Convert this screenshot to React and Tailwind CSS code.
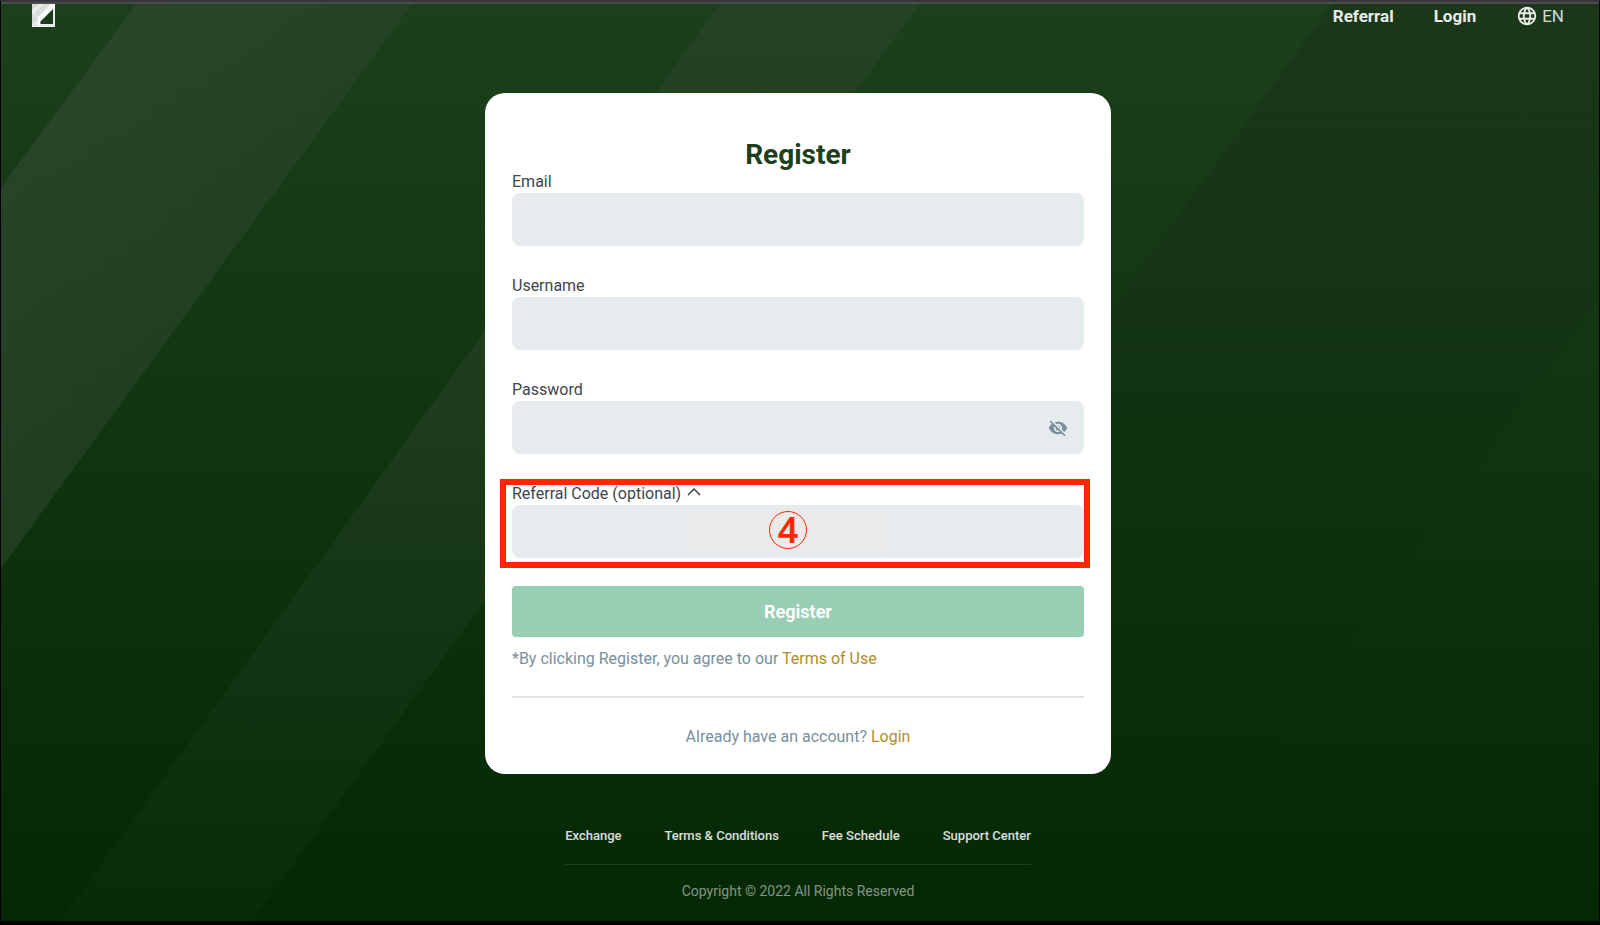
import React, { useState } from "react";
import { MdOutlineLanguage, MdVisibilityOff } from "react-icons/md";

const FIELDS = [
  { id: "email", label: "Email", type: "email" },
  { id: "username", label: "Username", type: "text" },
  { id: "password", label: "Password", type: "password" },
];

const FOOTER_LINKS = ["Exchange", "Terms & Conditions", "Fee Schedule", "Support Center"];

function Logo() {
  return (
    <svg viewBox="0 0 23 23" className="size-[23px]">
      <path d="M0 0H23V23H0Z" fill="#e9ece9" />
      <path d="M0 0H7L0 6Z" fill="#d3d8d3" />
      <path d="M11 0H18L5 13L2 10Z" fill="#d9ddd9" />
      <path d="M0 9L6 15L0 21Z" fill="#d6dad6" />
      <path d="M20 0H23V4L8 18V23H6V14Z" fill="#fbfcfb" />
      <path d="M21 5V20H8.500V17.500Z" fill="#1a3c1a" />
    </svg>
  );
}

// Diagonal bands behind the page
function Stripes() {
  return (
    <svg
      viewBox="0 0 1600 925"
      preserveAspectRatio="none"
      className="absolute inset-0 h-full w-full"
      aria-hidden="true"
    >
      <defs>
        <linearGradient id="bandA" x1="0" y1="0" x2="1" y2="0">
          <stop offset="0" stopColor="#6a6a6a" stopOpacity="0.2" />
          <stop offset="1" stopColor="#6a6a6a" stopOpacity="0.1" />
        </linearGradient>
        <linearGradient id="bandB" gradientUnits="userSpaceOnUse" x1="0" y1="0" x2="0" y2="925">
          <stop offset="0" stopColor="#6a6a6a" stopOpacity="0.1" />
          <stop offset="0.45" stopColor="#6a6a6a" stopOpacity="0.14" />
          <stop offset="0.75" stopColor="#6a6a6a" stopOpacity="0.08" />
          <stop offset="1" stopColor="#6a6a6a" stopOpacity="0.04" />
        </linearGradient>
        <linearGradient id="bandC" gradientUnits="userSpaceOnUse" x1="0" y1="0" x2="0" y2="800">
          <stop offset="0" stopColor="#141a10" stopOpacity="0.2" />
          <stop offset="1" stopColor="#141a10" stopOpacity="0" />
        </linearGradient>
      </defs>
      <path d="M137 0L0 187V570L413 0Z" fill="url(#bandA)" />
      <path d="M721 0L60 925H251L921 0Z" fill="url(#bandB)" />
      <path d="M1334 0L665 925H1147L1600 299V0Z" fill="url(#bandC)" />
    </svg>
  );
}

function Field({ id, label, type }) {
  return (
    <div className="mb-[29px]">
      <label htmlFor={id} className="block text-base leading-[22px]">
        {label}
      </label>
      <div className="relative">
        <input
          id={id}
          type={type}
          className="block h-[53px] w-full rounded-lg bg-[#e6ebed] px-4 outline-none"
        />
        {type === "password" && (
          <button
            type="button"
            aria-label="Show password"
            className="absolute inset-y-0 right-4 text-[#78909c]"
          >
            <MdVisibilityOff className="size-5" />
          </button>
        )}
      </div>
    </div>
  );
}

export default function App() {
  const [open, setOpen] = useState(true);

  return (
    <div className="relative flex min-h-screen flex-col border-x border-t-2 border-b-4 border-x-black border-t-[#37373b] border-b-black bg-linear-to-b from-[#1c3f1c] via-[#0f340f] to-[#042804] font-[Roboto,sans-serif] text-[#3c464b]">
      <Stripes />

      <header className="relative flex items-start justify-between border-t-2 border-[#4b4b50] pr-[35px] pl-[31px] text-white/90">
        <a href="#" aria-label="Home">
          <Logo />
        </a>
        <nav className="flex items-center gap-10 text-[17px] leading-6">
          <a href="#" className="font-bold">Referral</a>
          <a href="#" className="font-bold">Login</a>
          <button type="button" className="flex items-center gap-1">
            <MdOutlineLanguage className="size-[22px]" />
            <span className="text-white/80">EN</span>
          </button>
        </nav>
      </header>

      <div className="relative flex flex-col items-center pr-1">
        <main className="mt-[65px] w-full max-w-[626px] rounded-[20px] bg-white px-[27px] pt-[46px] pb-[23px]">
          <h1 className="text-center text-[28px] leading-8 font-bold text-[#1b401b]">Register</h1>
          <form onSubmit={(e) => e.preventDefault()}>
            {FIELDS.map((f) => (
              <Field key={f.id} {...f} />
            ))}

            <div className="relative">
              <div className="flex items-center gap-1.5">
                <label htmlFor="referral" className="text-base leading-[22px]">
                  Referral Code (optional)
                </label>
                <button type="button" aria-label="Toggle referral code" onClick={() => setOpen(!open)}>
                  <svg viewBox="0 0 14 8" className="mb-1 h-2 w-3.5" fill="none" stroke="currentColor" strokeWidth="1.500">
                    <path d="M1 7L7 1L13 7" />
                  </svg>
                </button>
              </div>
              {open && (
                <div className="relative">
                  <input
                    id="referral"
                    type="text"
                    className="block h-[53px] w-full rounded-lg bg-[#e6ebed] px-4 outline-none"
                  />
                  <div className="pointer-events-none absolute inset-0 flex items-center justify-center pr-5 pb-1">
                    <div className="flex h-10 w-[206px] items-center justify-center bg-[#eaeaea]">
                      <span className="flex size-[38px] items-center justify-center rounded-full border border-[#ff2600] font-[Noto_Sans,sans-serif] text-4xl font-semibold text-[#ff2600]">
                        4
                      </span>
                    </div>
                  </div>
                </div>
              )}
              <div className="pointer-events-none absolute -top-1 -right-1.5 -bottom-2.5 -left-3 border-[6px] border-[#ff2600]" />
            </div>

            <button
              type="submit"
              className="mt-7 block h-[51px] w-full rounded-sm bg-[#98ceb4] text-lg font-bold text-white"
            >
              Register
            </button>
          </form>

          <p className="mt-2 text-base leading-7 text-[#78909c]">
            *By clicking Register, you agree to our{" "}
            <a href="#" className="text-[#b08d2a]">Terms of Use</a>
          </p>
          <hr className="mt-[23px] border-t-2 border-[#dfe4e7]" />
          <p className="mt-[25px] text-center text-base leading-7 text-[#78909c]">
            Already have an account?{" "}
            <a href="#" className="text-[#b08d2a]">Login</a>
          </p>
        </main>

        <footer className="mt-[50px]">
          <nav className="flex gap-[43px] border-b border-white/10 pb-4 text-[13px] leading-6 font-medium text-white/85">
            {FOOTER_LINKS.map((t) => (
              <a key={t} href="#">{t}</a>
            ))}
          </nav>
          <p className="mt-4 text-center text-sm leading-5 text-white/50">
            Copyright © 2022 All Rights Reserved
          </p>
        </footer>
      </div>
    </div>
  );
}
